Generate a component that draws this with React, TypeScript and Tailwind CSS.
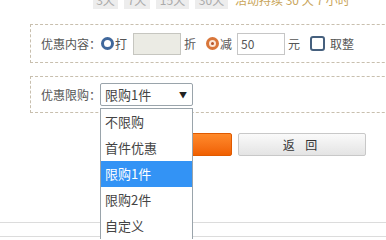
import React from "react";

const font = { fontFamily: '"Noto Sans CJK SC", "Noto Sans", sans-serif' };

const days = [
  { label: "3天", w: "w-[25px]" },
  { label: "7天", w: "w-[26px]" },
  { label: "15天", w: "w-[33px]" },
  { label: "30天", w: "w-[33px]" },
];

const options = ["不限购", "首件优惠", "限购1件", "限购2件", "自定义"];

export default function App() {
  return (
    <div
      className="relative h-[239px] w-[386px] overflow-hidden bg-white text-[12px] text-[#555]"
      style={font}
    >
      {/* day presets */}
      <div className="mt-[-9px] ml-[93px] flex h-[18px] items-center gap-[6px] whitespace-nowrap">
        {days.map((d) => (
          <div
            key={d.label}
            className={`${d.w} flex h-[18px] shrink-0 items-center justify-center bg-[#ededed] text-[#aaa]`}
          >
            {d.label}
          </div>
        ))}
        <span className="ml-[1px] text-[#c9a55a]">活动持续 30 天 7 小时</span>
      </div>

      {/* discount content */}
      <div className="mt-[15px] ml-[30px] flex h-[39px] w-[400px] items-center border border-dashed border-[#c8bfae] pl-[10px] whitespace-nowrap">
        <span className="w-[60px] shrink-0">优惠内容：</span>
        <span className="h-[13px] w-[13px] shrink-0 rounded-full border-[3px] border-[#40689c]" />
        <span className="ml-[1px]">打</span>
        <div className="ml-[6px] h-[22px] w-[48px] shrink-0 border border-[#c6c6c0] bg-[#ebebe4]" />
        <span className="ml-[3px]">折</span>
        <span className="ml-[10px] flex h-[13px] w-[13px] shrink-0 items-center justify-center rounded-full border-[3px] border-[#d9763a] bg-[#fbe7d8]">
          <span className="h-[3px] w-[3px] rounded-full bg-[#b5532a]" />
        </span>
        <span className="ml-[1px]">减</span>
        <div className="ml-[5px] flex h-[22px] w-[48px] shrink-0 items-center border border-[#c6c6c6] bg-white pl-[3px] text-[#555]">
          50
        </div>
        <span className="ml-[3px]">元</span>
        <span className="ml-[10px] h-[15px] w-[15px] shrink-0 rounded-[3px] border-2 border-[#46607e]" />
        <span className="ml-[5px]">取整</span>
      </div>

      {/* purchase limit */}
      <div className="mt-[13px] ml-[30px] flex h-[37px] w-[400px] items-center border border-dashed border-[#c8bfae] pl-[10px] whitespace-nowrap">
        <span className="w-[59px] shrink-0">优惠限购：</span>
        <div className="flex h-[23px] w-[93px] shrink-0 items-center justify-between rounded-[2px] border border-[#9aa4ab] bg-white pr-[5px] pl-[4px] text-[13px] text-[#444]">
          <span>限购1件</span>
          <span className="text-[8px] text-[#222]">▼</span>
        </div>
      </div>

      {/* actions */}
      <div className="mt-[20px] ml-[130px] flex gap-[6px]">
        <div className="h-[23px] w-[102px] rounded-[2px] border border-[#e05a00] bg-gradient-to-b from-[#ff8a2a] to-[#f06000]" />
        <div className="flex h-[23px] w-[128px] items-center justify-center rounded-[2px] border border-[#c8c8c8] bg-gradient-to-b from-[#fafafa] to-[#e4e4e4] text-[12px] tracking-[4px] text-[#333]">
          返 回
        </div>
      </div>

      <div className="mt-[66px] border-t border-[#dcdcdc]" />
      <div className="mt-[13px] border-t border-[#dcdcdc]" />

      {/* open dropdown */}
      <div className="absolute top-[108px] left-[100px] w-[93px] border border-[#9aa4ab] bg-white text-[13px] text-[#444]">
        {options.map((o) => (
          <div
            key={o}
            className={`flex h-[26px] items-center pl-[4px] ${
              o === "限购1件" ? "bg-[#3393f5] text-white" : ""
            }`}
          >
            {o}
          </div>
        ))}
      </div>
    </div>
  );
}
